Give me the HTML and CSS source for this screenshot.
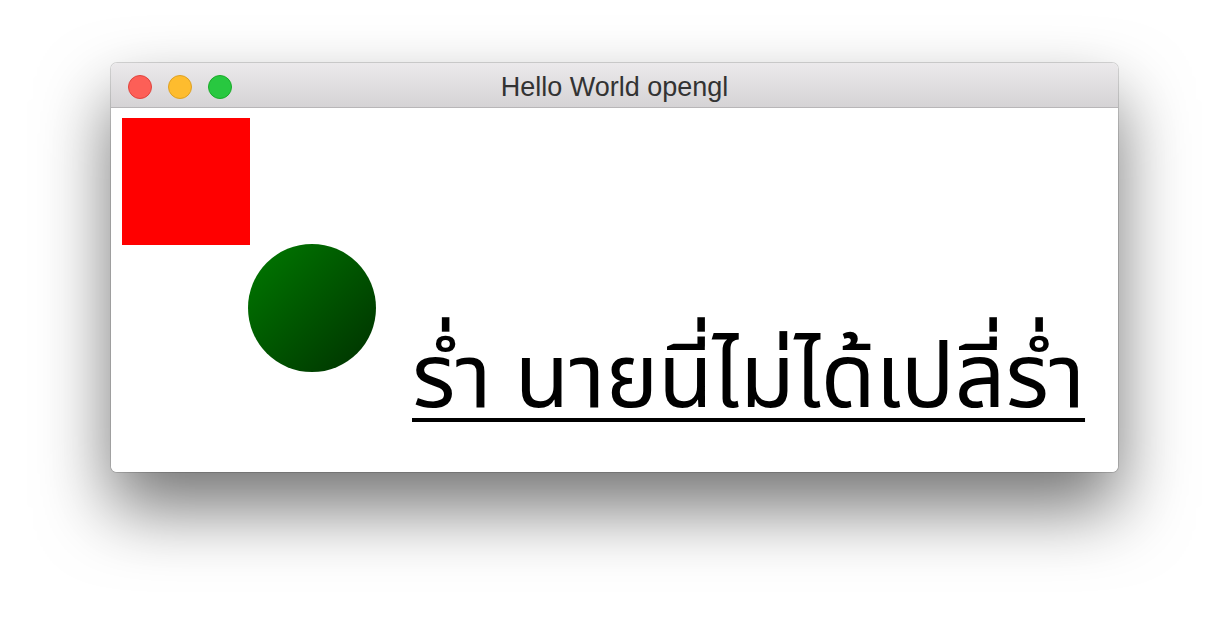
FILE: index.html
```html
<!DOCTYPE html>
<html>
<head>
<meta charset="utf-8">
<link rel="stylesheet" href="styles.css">
</head>
<body>
<div class="window">
  <div class="titlebar">
    <div class="lights">
      <span class="light red"></span>
      <span class="light yellow"></span>
      <span class="light green"></span>
    </div>
    <div class="title">Hello World opengl</div>
  </div>
  <div class="content">
    <div class="square"></div>
    <div class="row">
      <div class="circle"></div>
      <div class="thai">ร่ำ นายนี่ไม่ได้เปลี่ร่ำ</div>
    </div>
  </div>
</div>
</body>
</html>
```
FILE: styles.css
```css
html, body {
  margin: 0;
  padding: 0;
  background: #ffffff;
}
body {
  width: 1230px;
  height: 632px;
  overflow: hidden;
  padding-top: 63px;
  box-sizing: border-box;
}
.window {
  margin-left: 111px;
  width: 1007px;
  height: 409px;
  border-radius: 6px;
  overflow: hidden;
  box-shadow: 0 36px 70px rgba(0,0,0,0.55), 0 0 0 1px rgba(0,0,0,0.15);
  display: flex;
  flex-direction: column;
}
.titlebar {
  height: 44px;
  background: linear-gradient(#ebe9eb, #d5d3d5);
  border-bottom: 1px solid #b8b6b8;
  position: relative;
  display: flex;
  align-items: center;
  flex-shrink: 0;
}
.lights {
  display: flex;
  gap: 16px;
  margin-left: 17px;
  margin-top: 3px;
}
.light {
  width: 24px;
  height: 24px;
  border-radius: 50%;
  box-sizing: border-box;
}
.red { background: #fd5f57; border: 1px solid #e0443e; }
.yellow { background: #febc2e; border: 1px solid #dea123; }
.green { background: #28c840; border: 1px solid #1aab29; }
.title {
  position: absolute;
  left: 0;
  right: 0;
  top: 9px;
  text-align: center;
  font-family: "Liberation Sans", Arial, sans-serif;
  font-size: 27px;
  line-height: 30px;
  color: #333;
}
.content {
  flex: 1;
  background: #fff;
  position: relative;
}
.square {
  width: 128px;
  height: 127px;
  background: #ff0000;
  margin: 10px 0 0 11px;
}
.row {
  display: flex;
  align-items: flex-start;
  margin-left: 137px;
  margin-top: -1px;
}
.circle {
  width: 128px;
  height: 128px;
  border-radius: 50%;
  background: linear-gradient(135deg, #007a00, #003000);
  flex-shrink: 0;
}
.thai {
  margin-left: 36px;
  margin-top: 84px;
  font-family: "Noto Sans", "Noto Sans Thai", sans-serif;
  font-size: 89px;
  line-height: 1;
  color: #000;
  text-decoration: underline;
  text-decoration-thickness: 4px;
  text-underline-offset: 11px;
  white-space: nowrap;
}
```
